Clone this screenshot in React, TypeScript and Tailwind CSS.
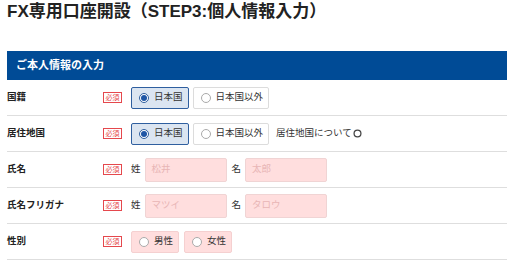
import React from "react"

const font = { fontFamily: '"Liberation Sans", "Noto Sans CJK JP", sans-serif' }

function Badge() {
  return (
    <span className="w-[19px] h-[11px] border border-[#e5484d] text-[#e5484d] text-[7px] leading-none flex items-center justify-center bg-white shrink-0">
      必須
    </span>
  )
}

function Radio({ label, checked, pink }: { label: string; checked?: boolean; pink?: boolean }) {
  const box = checked
    ? "bg-[#dbe5f1] border-[#2f5f9f]"
    : pink
    ? "bg-[#ffdede] border-[#f5d0d0]"
    : "bg-white border-[#dcdcdc]"
  return (
    <div className={`h-[22px] pl-[7px] pr-[5px] flex items-center gap-[5px] border rounded-[2px] text-[9.5px] text-[#333] ${box}`}>
      <span
        className={`w-[10px] h-[10px] rounded-full border flex items-center justify-center bg-white ${
          checked ? "border-[#2f5f9f]" : "border-[#aaa]"
        }`}
      >
        {checked && <span className="w-[6px] h-[6px] rounded-full bg-[#1f56a5]" />}
      </span>
      {label}
    </div>
  )
}

function NameInput({ placeholder }: { placeholder: string }) {
  return (
    <div className="w-[82px] h-[24px] bg-[#ffdede] border border-[#f0d4d4] rounded-[2px] flex items-center px-[6px] text-[9.5px] text-[#e8b5b5]">
      {placeholder}
    </div>
  )
}

function Row({ label, children }: { label: string; children: React.ReactNode }) {
  return (
    <div className="h-[36px] border-b border-[#dedede] flex items-center">
      <div className="w-[96px] text-[9.5px] font-bold text-[#222]">{label}</div>
      <Badge />
      <div className="ml-[9px] flex items-center">{children}</div>
    </div>
  )
}

export default function App() {
  return (
    <div className="w-[524px] h-[266px] bg-white overflow-hidden" style={font}>
      <div className="ml-[7px] w-[500px]">
        <h1 className="pt-[1px] h-[51px] text-[17px] font-bold text-[#222] leading-[22px]">
          FX専用口座開設（STEP3:個人情報入力）
        </h1>
        <div className="h-[29px] bg-[#004b96] flex items-center pl-[9px] text-[11px] font-bold text-white">
          ご本人情報の入力
        </div>

        <Row label="国籍">
          <div className="flex gap-[4px]">
            <Radio label="日本国" checked />
            <Radio label="日本国以外" />
          </div>
        </Row>

        <Row label="居住地国">
          <div className="flex gap-[4px] items-center">
            <Radio label="日本国" checked />
            <Radio label="日本国以外" />
            <span className="ml-[3px] text-[9.5px] text-[#333] flex items-center gap-[1px]">
              居住地国について
              <svg width="9" height="9" viewBox="0 0 10 10">
                <circle cx="5" cy="5" r="3.8" fill="none" stroke="#444" strokeWidth="1.4" />
              </svg>
            </span>
          </div>
        </Row>

        <Row label="氏名">
          <span className="text-[9.5px] text-[#333] mr-[4px]">姓</span>
          <NameInput placeholder="松井" />
          <span className="text-[9.5px] text-[#333] ml-[5px] mr-[4px]">名</span>
          <NameInput placeholder="太郎" />
        </Row>

        <Row label="氏名フリガナ">
          <span className="text-[9.5px] text-[#333] mr-[4px]">姓</span>
          <NameInput placeholder="マツイ" />
          <span className="text-[9.5px] text-[#333] ml-[5px] mr-[4px]">名</span>
          <NameInput placeholder="タロウ" />
        </Row>

        <Row label="性別">
          <div className="flex gap-[5px]">
            <Radio label="男性" pink />
            <Radio label="女性" pink />
          </div>
        </Row>
      </div>
    </div>
  )
}
